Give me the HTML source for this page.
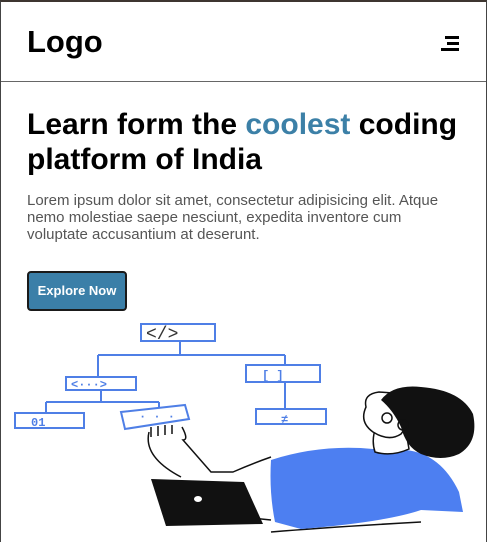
<!DOCTYPE html>
<html><head><style>
html,body{margin:0;padding:0;}
body{width:487px;height:542px;overflow:hidden;background:#fff;font-family:"Liberation Sans",Arial,sans-serif;position:relative;box-sizing:border-box;border-top:2px solid #3d3530;border-left:1px solid #444;border-right:1px solid #444;}
.hdr{position:absolute;left:0;top:0;width:485px;height:79px;border-bottom:1px solid #666;}
.logo{position:absolute;left:26px;top:22px;font-size:31px;font-weight:bold;color:#000;}
.menu{position:absolute;left:440px;top:34px;width:18px;}
.menu i{display:block;height:3px;background:#000;margin-bottom:3px;margin-left:auto;}
h1{position:absolute;left:26px;top:105px;margin:0;font-size:30px;line-height:35px;font-weight:bold;color:#000;width:450px;}
h1 span{color:#3c80a7;}
p{position:absolute;left:26px;top:190px;margin:0;font-size:15px;line-height:17px;color:#555;width:425px;}
.btn{position:absolute;left:26px;top:269px;width:96px;height:36px;background:#3b7fa8;border:2px solid #1a1a1a;border-radius:4px;color:#fff;font-size:13px;font-weight:bold;text-align:center;line-height:36px;}
svg{position:absolute;left:0;top:0;}
</style></head><body>
<div class="hdr"><div class="logo">Logo</div><div class="menu"><i style="width:14px"></i><i style="width:12px"></i><i style="width:18px"></i></div></div>
<h1>Learn form the <span>coolest</span> coding platform of India</h1>
<p>Lorem ipsum dolor sit amet, consectetur adipisicing elit. Atque nemo molestiae saepe nesciunt, expedita inventore cum voluptate accusantium at deserunt.</p>
<div class="btn">Explore Now</div>
<svg width="487" height="542" viewBox="0 0 487 542">
<g fill="none" stroke="#4f7fe6" stroke-width="2">
<rect x="140" y="322" width="74" height="17"/>
<path d="M179 339V353M97 353H284M97 353V375M284 353V363M100 388V400M45 400H158M45 400V410M158 400V406M284 380V407"/>
<rect x="65" y="375" width="70" height="13"/>
<rect x="245" y="363" width="74" height="17"/>
<rect x="14" y="411" width="69" height="15"/>
<rect x="255" y="407" width="70" height="15"/>
<path d="M120 410L184 403L188 417L124 427Z"/>
</g>
<g font-family="Liberation Mono,monospace" fill="#333" font-size="18">
<text x="145" y="337">&lt;/&gt;</text></g>
<g font-family="Liberation Mono,monospace" fill="#4f7fe6" font-size="12" font-weight="bold">
<text x="70" y="386">&lt;···&gt;</text><text x="261" y="377">[  ]</text><text x="30" y="424">01</text><text x="280" y="421">≠</text><text x="138" y="418">· · ·</text></g>
<g fill="none" stroke="#111" stroke-width="1.5">
<path d="M148 430Q142 455 180 475M181 425Q188 438 182 438L210 470L232 470Q250 462 270 455M270 530Q330 525 420 520M240 515L270 518"/>
<path d="M150 425v10M157 424v10M164 423v10M171 423v9"/>
</g>
<path d="M270 458Q320 442 372 447L405 448Q440 452 458 490L462 510L420 508Q385 520 300 527L274 520Q268 490 270 458Z" fill="#4d7ff1"/>
<path d="M375 425Q370 438 374 450Q390 455 408 447L405 430Z" fill="#fff" stroke="#111" stroke-width="1.5"/>
<path d="M365 405Q362 392 378 390L405 392Q410 420 400 432Q388 440 372 430Q358 420 365 405Z" fill="#fff" stroke="#111" stroke-width="1.5"/>
<path d="M380 398Q392 382 420 385Q460 388 472 412Q478 440 458 452Q440 460 420 452Q405 445 400 425Q392 408 380 398Z" fill="#111"/>
<circle cx="386" cy="416" r="5" fill="none" stroke="#111" stroke-width="1.5"/>
<circle cx="402" cy="423" r="5" fill="none" stroke="#111" stroke-width="1.5"/>
<path d="M150 477L243 480L262 522L165 524Z" fill="#111"/>
<ellipse cx="197" cy="497" rx="4" ry="3" fill="#fff"/>
</svg>
</body></html>
